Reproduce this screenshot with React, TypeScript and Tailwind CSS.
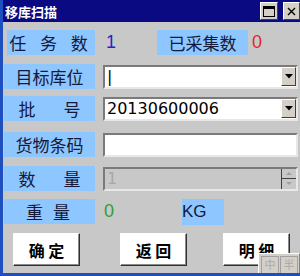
const cjk = "font-['Noto_Sans_CJK_SC',sans-serif]";

function Label({ text, className = "" }: { text: string; className?: string }) {
  return (
    <div
      className={`flex h-[25px] items-center justify-center bg-[#8ec6ff] text-[17px] leading-none text-[#14183a] ${cjk} ${className}`}
    >
      {text}
    </div>
  );
}

function DropButton() {
  return (
    <div className="flex h-[19px] w-[15px] items-center justify-center border border-t-white border-l-white border-r-[#404040] border-b-[#404040] bg-[#d4d0c8]">
      <svg width="8" height="5" viewBox="0 0 8 5">
        <path d="M0 0h8L4 4.5z" fill="#000" />
      </svg>
    </div>
  );
}

function Field({
  value,
  combo,
  disabled,
  spin,
}: {
  value?: string;
  combo?: boolean;
  disabled?: boolean;
  spin?: boolean;
}) {
  return (
    <div
      className={`flex h-[24px] w-[195px] items-center border-2 border-t-[#7a7a7a] border-l-[#7a7a7a] border-r-[#e8e8e8] border-b-[#e8e8e8] ${
        disabled ? "bg-[#c8c8c8]" : "bg-white"
      }`}
    >
      <div
        className={`flex h-full flex-1 items-center pl-[2px] font-['DejaVu_Sans',sans-serif] text-[16px] leading-none ${
          disabled ? "text-[#a8a8a8]" : "text-black"
        }`}
      >
        {value}
      </div>
      {combo && (
        <div className="pr-[0px]">
          <DropButton />
        </div>
      )}
      {spin && (
        <div className="flex h-full w-[15px] flex-col border-l border-[#404040]">
          <div className="flex flex-1 items-center justify-center border-b border-[#404040]">
            <svg width="6" height="3" viewBox="0 0 6 3">
              <path d="M0 3h6L3 0z" fill="#a0a0a0" />
            </svg>
          </div>
          <div className="flex flex-1 items-center justify-center">
            <svg width="6" height="3" viewBox="0 0 6 3">
              <path d="M0 0h6L3 3z" fill="#a0a0a0" />
            </svg>
          </div>
        </div>
      )}
    </div>
  );
}

function Btn({ text }: { text: string }) {
  return (
    <button
      className={`flex h-[33px] w-[67px] items-center justify-center border border-t-white border-l-white border-r-[#303030] border-b-[#303030] bg-white text-[16px] font-bold leading-none text-black shadow-[inset_-1px_-1px_0_#8a8a8a] ${cjk}`}
    >
      {text}
    </button>
  );
}

export default function App() {
  return (
    <div className="relative flex h-[276px] w-[300px] flex-col overflow-hidden border-b-[3px] border-l-[3px] border-[#1f4fbf] bg-[#c8c8c8]">
      <div className="-ml-[3px] flex h-[22px] w-[300px] shrink-0 items-center justify-between bg-[#0a0a82] pl-[5px]">
        <span className={`text-[13px] font-bold leading-none text-white ${cjk}`}>移库扫描</span>
        <div className="flex items-center gap-[5px] pr-0">
          <div className="flex h-[18px] w-[18px] items-center justify-center border border-t-white border-l-white border-r-[#404040] border-b-[#404040] bg-[#d4d0c8]">
            <div className="h-[11px] w-[12px] border border-t-[3px] border-black" />
          </div>
          <div className="flex h-[18px] w-[17px] items-center justify-center border border-t-white border-l-white border-r-[#404040] border-b-[#404040] bg-[#d4d0c8]">
            <svg width="9" height="9" viewBox="0 0 9 9">
              <path d="M1 1l7 7M8 1L1 8" stroke="#000" strokeWidth="1.4" />
            </svg>
          </div>
        </div>
      </div>

      <div className="flex flex-col pl-[1px]">
        <div className="mt-[8px] flex h-[25px] items-center">
          <Label text="任 务 数" className="ml-[3px] w-[88px] tracking-[5px]" />
          <span className="ml-[11px] w-[51px] font-['Liberation_Sans',sans-serif] text-[18px] text-[#2424c8]">1</span>
          <Label text="已采集数" className="w-[91px]" />
          <span className="ml-[4px] font-['Liberation_Sans',sans-serif] text-[18px] text-[#e02828]">0</span>
        </div>

        <div className="mt-[9px] flex h-[25px] items-center gap-[8px]">
          <Label text="目标库位" className="w-[91px]" />
          <Field combo value="|" />
        </div>

        <div className="mt-[7px] flex h-[25px] items-center gap-[8px]">
          <Label text="批  号" className="w-[91px] tracking-[12px] pl-[12px]" />
          <Field combo value="20130600006" />
        </div>

        <div className="mt-[11px] flex h-[25px] items-center gap-[8px]">
          <Label text="货物条码" className="w-[91px]" />
          <Field />
        </div>

        <div className="mt-[9px] flex h-[25px] items-center gap-[8px]">
          <Label text="数 量" className="w-[91px] tracking-[12px] pl-[12px]" />
          <Field disabled spin value="1" />
        </div>

        <div className="mt-[8px] flex h-[25px] items-center">
          <Label text="重 量" className="w-[91px] tracking-[3px]" />
          <span className="ml-[9px] w-[78px] font-['Liberation_Sans',sans-serif] text-[18px] text-[#30a030]">0</span>
          <div className="flex h-[26px] w-[42px] items-center bg-[#8ec6ff] font-['Liberation_Sans',sans-serif] text-[17px] leading-none text-[#14183a]">
            KG
          </div>
        </div>

        <div className="mt-[9px] flex items-center pl-[9px]">
          <Btn text="确 定" />
          <div className="ml-[40px]">
            <Btn text="返 回" />
          </div>
          <div className="ml-[36px]">
            <Btn text="明 细" />
          </div>
        </div>
      </div>

      <div className="absolute bottom-[-3px] right-0 flex h-[23px] w-[42px] items-center gap-[1px] border border-t-white border-l-white border-[#808080] bg-[#d4d0c8] pl-[2px]">
        <div className={`flex h-[18px] w-[18px] items-center justify-center border border-[#a0a0a0] text-[11px] leading-none text-[#a8a8a8] ${cjk}`}>中</div>
        <div className={`flex h-[18px] w-[18px] items-center justify-center border border-[#a0a0a0] text-[11px] leading-none text-[#a8a8a8] ${cjk}`}>半</div>
      </div>
    </div>
  );
}
